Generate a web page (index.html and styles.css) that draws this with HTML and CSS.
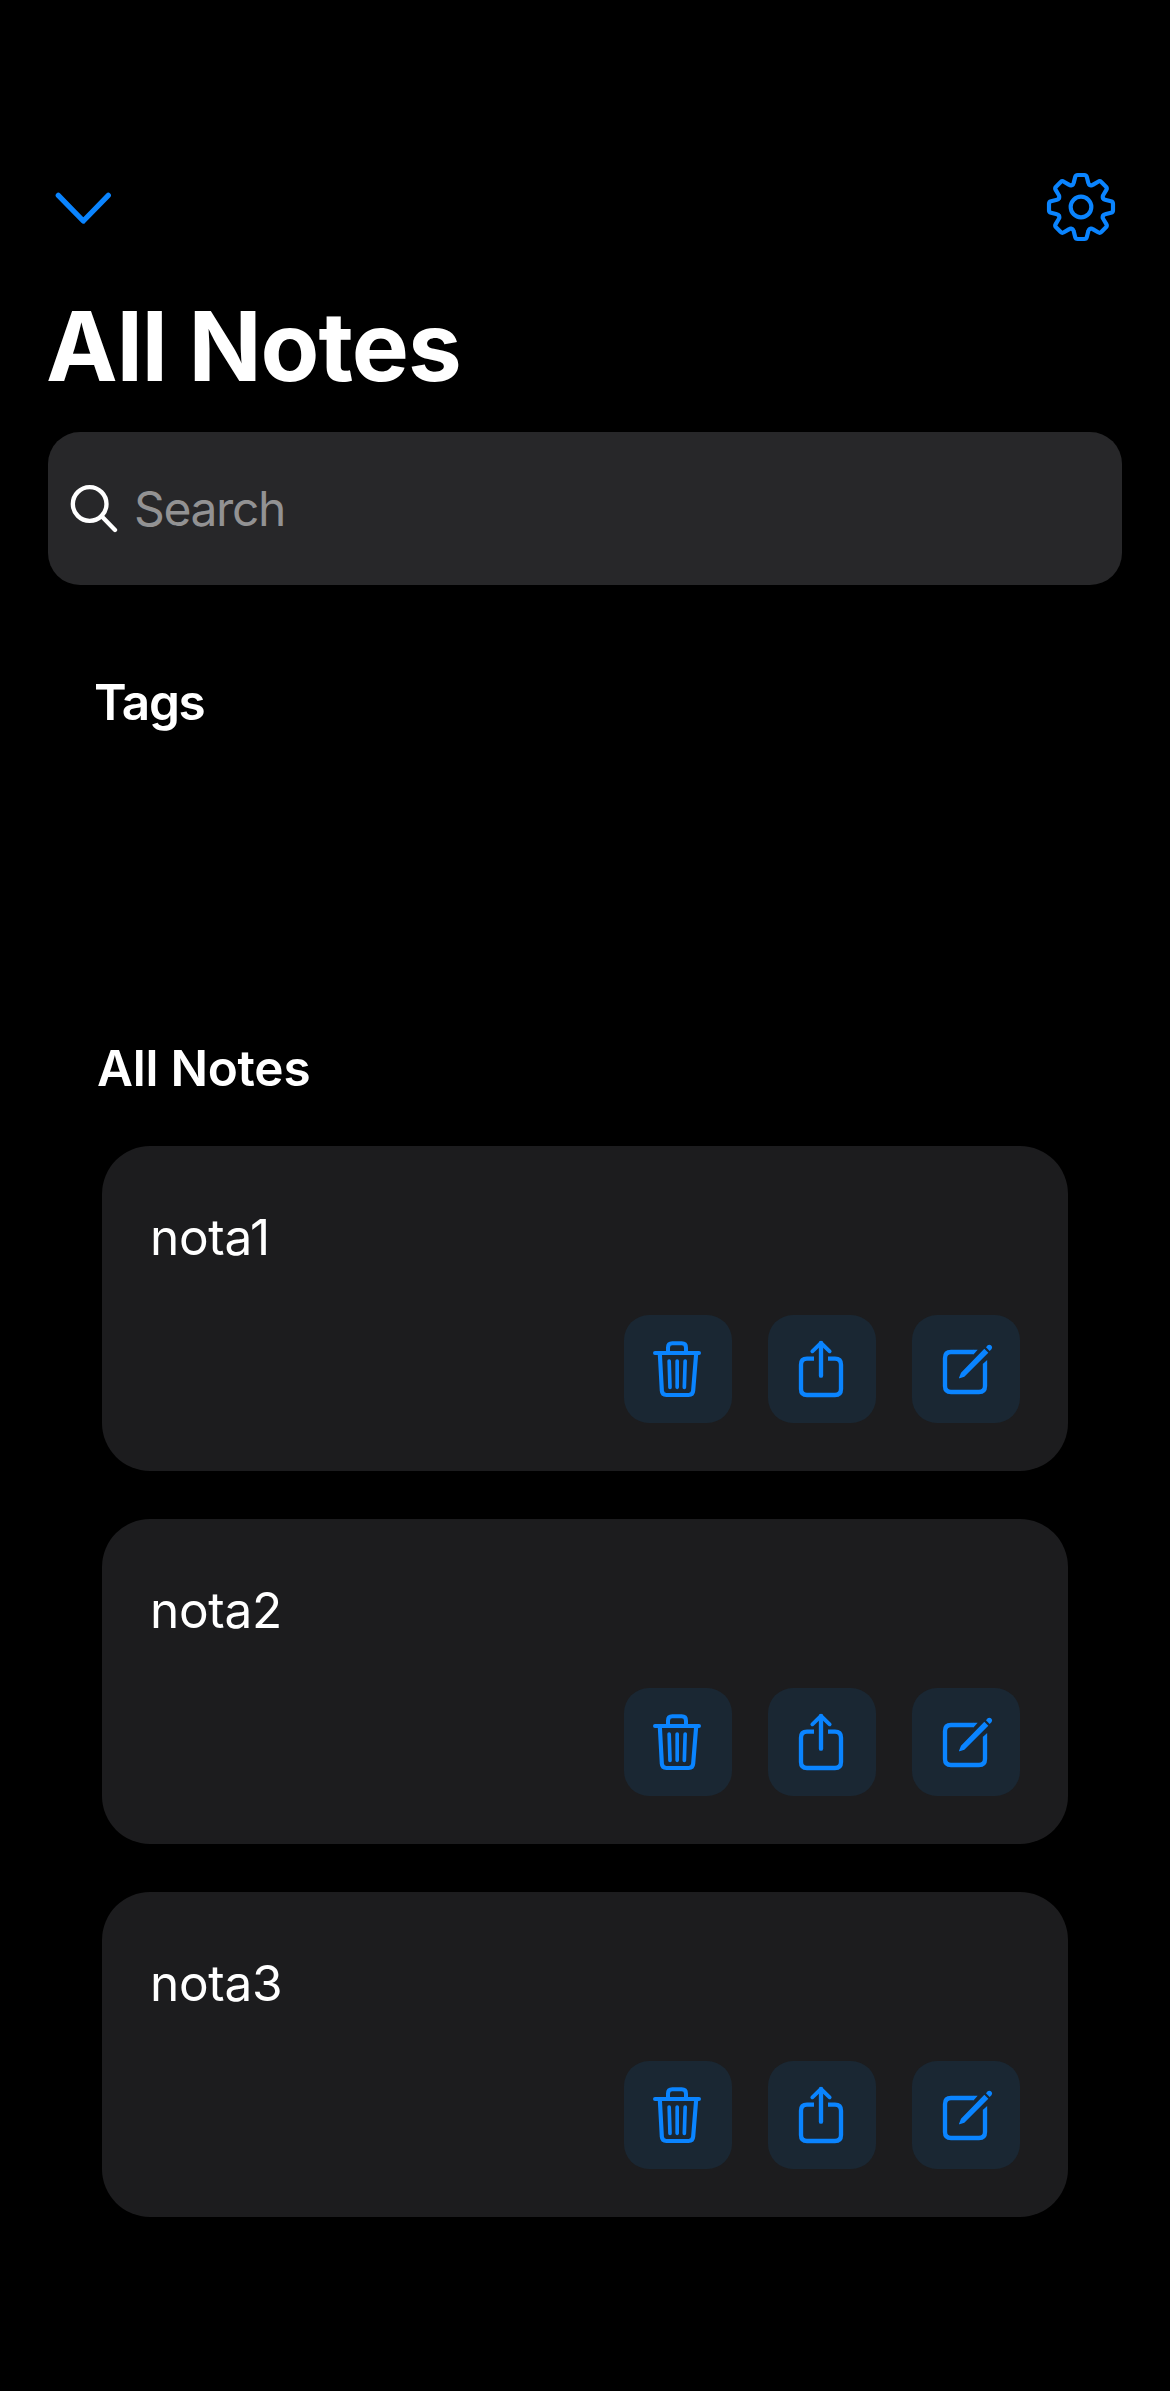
FILE: index.html
```html
<!DOCTYPE html>
<html lang="en">
<head>
<meta charset="utf-8">
<title>All Notes</title>
<link rel="stylesheet" href="styles.css">
</head>
<body>
<svg class="defs" width="0" height="0" aria-hidden="true">
  <symbol id="trash" viewBox="0 0 324 324">
    <g fill="none" stroke="currentColor" stroke-linecap="round" stroke-linejoin="round">
      <path stroke-width="12" d="M93 114H225M132 112V98Q132 85 145 85H173Q186 85 186 98V112"/>
      <path stroke-width="12.500" d="M107.500 116L113.500 227Q114.500 240 127 240H194Q206.500 240 207.500 227L216.500 116"/>
      <path stroke-width="11" d="M135.500 138L138 217M159.500 138V217M183.500 138L181 217"/>
    </g>
  </symbol>
  <symbol id="share" viewBox="0 0 324 324">
    <g fill="none" stroke="currentColor" stroke-width="13">
      <path d="M138 131H117Q99 131 99 149V222Q99 240 117 240H201Q219 240 219 222V149Q219 131 201 131H180"/>
      <path stroke-linecap="round" stroke-linejoin="round" d="M159 84V182"/>
      <path stroke-width="11.500" stroke-linecap="round" stroke-linejoin="round" d="M133 109L159 84L185 109"/>
    </g>
  </symbol>
  <symbol id="edit" viewBox="0 0 324 324">
    <path fill="none" stroke="currentColor" stroke-width="13" d="M186 111H117Q99 111 99 129V213Q99 231 117 231H201Q219 231 219 213V146"/>
    <path fill="currentColor" d="M185 104.500H197L185 117.500ZM212.500 147L225.500 135V147ZM141 188L147 173L217 101L229 113L157 185L143 190Q140 190 141 188ZM222 97L227 91Q232 87 237 91Q243 96 239 102L233 108Z"/>
  </symbol>
</svg>
<main class="screen">
  <header class="topbar">
    <svg class="chevron" viewBox="0 0 60 36"><path d="M5.300 5.300L30.300 31L55.300 5.300"/></svg>
    <svg class="gear" viewBox="-105 -105 210 210">
      <defs><path id="tooth" d="M-27.200 -65.600Q-22.800 -67.400 -22 -72L-17.500 -90Q-16 -96 -10 -96H10Q16 -96 17.500 -90L22 -72Q22.800 -67.400 27.200 -65.600"/></defs>
      <use href="#tooth"/><use href="#tooth" transform="rotate(45)"/><use href="#tooth" transform="rotate(90)"/><use href="#tooth" transform="rotate(135)"/><use href="#tooth" transform="rotate(180)"/><use href="#tooth" transform="rotate(225)"/><use href="#tooth" transform="rotate(270)"/><use href="#tooth" transform="rotate(315)"/>
      <circle r="31"/>
    </svg>
  </header>
  <h1 class="title">All Notes</h1>
  <div class="search">
    <svg class="lens" viewBox="90 192 144 147"><circle cx="149" cy="252" r="50.500"/><path d="M185 289L225 330"/></svg>
    <span class="placeholder">Search</span>
  </div>
  <section class="tags"><h2 class="heading tags-heading">Tags</h2></section>
  <section class="notes">
    <h2 class="heading notes-heading">All Notes</h2>
    <article class="card">
      <p class="name">nota1</p>
      <div class="actions"><span class="btn"><svg><use href="#trash"/></svg></span><span class="btn"><svg><use href="#share"/></svg></span><span class="btn"><svg><use href="#edit"/></svg></span></div>
    </article>
    <article class="card">
      <p class="name">nota2</p>
      <div class="actions"><span class="btn"><svg><use href="#trash"/></svg></span><span class="btn"><svg><use href="#share"/></svg></span><span class="btn"><svg><use href="#edit"/></svg></span></div>
    </article>
    <article class="card">
      <p class="name">nota3</p>
      <div class="actions"><span class="btn"><svg><use href="#trash"/></svg></span><span class="btn"><svg><use href="#share"/></svg></span><span class="btn"><svg><use href="#edit"/></svg></span></div>
    </article>
  </section>
</main>
</body>
</html>
```
FILE: styles.css
```css
* { box-sizing: border-box; margin: 0; padding: 0; }
body { background: #000; color: #fff; font-family: Inter, "Liberation Sans", sans-serif; }
svg { display: block; flex: none; }
.defs { display: none; }
.screen { width: 1170px; height: 2391px; padding: 172px 48px 0; overflow: hidden; }
.topbar { display: flex; justify-content: space-between; align-items: center; height: 70px; padding: 0 6px 0 5px; }
.chevron { width: 60px; height: 36px; margin-top: 2px; fill: none; stroke: #0a84ff; stroke-width: 5.3; stroke-linecap: round; stroke-linejoin: round; }
.gear { width: 70px; height: 70px; fill: none; stroke: #0a84ff; stroke-width: 12.5; stroke-linecap: round; }
.title { margin: 46px 0 0 -2px; height: 116px; font-size: 96px; line-height: 116px; font-weight: 700; letter-spacing: -1px; }
.search { display: flex; align-items: center; gap: 16px; height: 153px; margin-top: 28px; padding-left: 22px; border-radius: 32px; background: #272729; }
.lens { width: 48px; height: 49px; fill: none; stroke: #fff; stroke-width: 13; stroke-linecap: round; }
.placeholder { color: #929293; font-size: 48px; line-height: 58px; letter-spacing: -1.4px; }
.tags { height: 366px; margin-top: 87px; padding-left: 46px; }
.heading { font-size: 49.5px; line-height: 60px; font-weight: 600; }
.tags-heading { letter-spacing: -1.3px; }
.notes { display: flex; flex-direction: column; gap: 48px; padding: 0 54px; }
.notes-heading { margin-left: -5px; letter-spacing: -0.25px; }
.card { display: flex; flex-direction: column; justify-content: space-between; height: 325px; padding: 61px 48px 48px; border-radius: 48px; background: #1c1c1e; }
.name { font-size: 49.5px; line-height: 60px; letter-spacing: -0.3px; }
.actions { display: flex; justify-content: flex-end; gap: 36px; }
.btn { width: 108px; height: 108px; border-radius: 25px; background: #1a2733; color: #0a84ff; }
.btn svg { width: 108px; height: 108px; }
```
